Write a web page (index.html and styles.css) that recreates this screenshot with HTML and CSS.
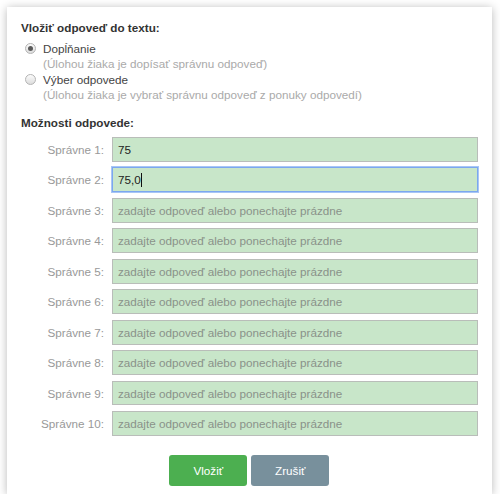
FILE: index.html
```html
<!DOCTYPE html>
<html>
<head>
<meta charset="utf-8">
<link rel="stylesheet" href="styles.css">
</head>
<body>
<div class="panel">
  <div class="heading">Vložiť odpoveď do textu:</div>
  <div class="options">
    <div class="option">
      <span class="radio checked"></span>
      <div class="option-text">
        <div class="option-title">Dopĺňanie</div>
        <div class="option-sub">(Úlohou žiaka je dopísať správnu odpoveď)</div>
      </div>
    </div>
    <div class="option">
      <span class="radio"></span>
      <div class="option-text">
        <div class="option-title">Výber odpovede</div>
        <div class="option-sub">(Úlohou žiaka je vybrať správnu odpoveď z ponuky odpovedí)</div>
      </div>
    </div>
  </div>
  <div class="heading heading2">Možnosti odpovede:</div>
  <div class="rows">
    <div class="row"><span class="label">Správne 1:</span><div class="field"><span class="val">75</span></div></div>
    <div class="row"><span class="label">Správne 2:</span><div class="field focus"><span class="val">75,0</span><span class="caret"></span></div></div>
    <div class="row"><span class="label">Správne 3:</span><div class="field"><span class="ph">zadajte odpoveď alebo ponechajte prázdne</span></div></div>
    <div class="row"><span class="label">Správne 4:</span><div class="field"><span class="ph">zadajte odpoveď alebo ponechajte prázdne</span></div></div>
    <div class="row"><span class="label">Správne 5:</span><div class="field"><span class="ph">zadajte odpoveď alebo ponechajte prázdne</span></div></div>
    <div class="row"><span class="label">Správne 6:</span><div class="field"><span class="ph">zadajte odpoveď alebo ponechajte prázdne</span></div></div>
    <div class="row"><span class="label">Správne 7:</span><div class="field"><span class="ph">zadajte odpoveď alebo ponechajte prázdne</span></div></div>
    <div class="row"><span class="label">Správne 8:</span><div class="field"><span class="ph">zadajte odpoveď alebo ponechajte prázdne</span></div></div>
    <div class="row"><span class="label">Správne 9:</span><div class="field"><span class="ph">zadajte odpoveď alebo ponechajte prázdne</span></div></div>
    <div class="row"><span class="label">Správne 10:</span><div class="field"><span class="ph">zadajte odpoveď alebo ponechajte prázdne</span></div></div>
  </div>
  <div class="buttons">
    <button class="btn btn-ok">Vložiť</button>
    <button class="btn btn-cancel">Zrušiť</button>
  </div>
</div>
</body>
</html>
```
FILE: styles.css
```css
html, body {
  margin: 0;
  padding: 0;
  background: #ffffff;
}
body {
  font-family: "Liberation Sans", Arial, sans-serif;
  font-size: 11.7px;
  color: #333;
}
.panel {
  box-sizing: border-box;
  width: 485px;
  height: 487px;
  margin: 7px 0 0 7px;
  background: #fff;
  box-shadow: 0 1px 9px rgba(0, 0, 0, 0.28);
  padding: 14px 14.5px 0 14px;
}
.heading {
  font-weight: bold;
  line-height: 14px;
  color: #333;
}
.options {
  margin-top: 5.5px;
  display: flex;
  flex-direction: column;
  gap: 1.5px;
  padding-left: 4px;
}
.option {
  display: flex;
  align-items: flex-start;
  gap: 7px;
}
.radio {
  box-sizing: border-box;
  width: 11px;
  height: 11px;
  margin-top: 2px;
  border-radius: 50%;
  border: 1px solid #b4b4b4;
  background: linear-gradient(#fcfcfc, #dcdcdc);
  display: flex;
  align-items: center;
  justify-content: center;
  flex: none;
}
.radio.checked::after {
  content: "";
  width: 5px;
  height: 5px;
  border-radius: 50%;
  background: #5a5a5a;
}
.option-title {
  line-height: 15px;
  color: #444;
}
.option-sub {
  line-height: 15px;
  color: #aaa;
}
.heading2 {
  margin-top: 14px;
}
.rows {
  margin-top: 7px;
  display: flex;
  flex-direction: column;
  gap: 5.9px;
}
.row {
  display: flex;
  align-items: center;
  gap: 8px;
}
.label {
  width: 83px;
  text-align: right;
  color: #999;
  flex: none;
}
.field {
  box-sizing: border-box;
  flex: 1;
  height: 24.6px;
  background: #c8e6c9;
  border: 1px solid #b9bdb9;
  display: flex;
  align-items: center;
  padding-left: 5px;
  color: #222;
}
.field.focus {
  border: 1px solid #7ba7ef;
  box-shadow: 0 0 0 1px #a8c6f5;
}
.ph {
  color: #8a928a;
}
.caret {
  width: 1px;
  height: 14px;
  background: #111;
}
.buttons {
  margin-top: 19px;
  display: flex;
  justify-content: center;
  gap: 4px;
}
.btn {
  width: 78px;
  height: 31.5px;
  border: none;
  border-radius: 3px;
  color: #fff;
  font-family: "Liberation Sans", Arial, sans-serif;
  font-size: 11.7px;
  padding: 0;
}
.btn-ok {
  background: #4caf50;
}
.btn-cancel {
  background: #78909c;
}
```
